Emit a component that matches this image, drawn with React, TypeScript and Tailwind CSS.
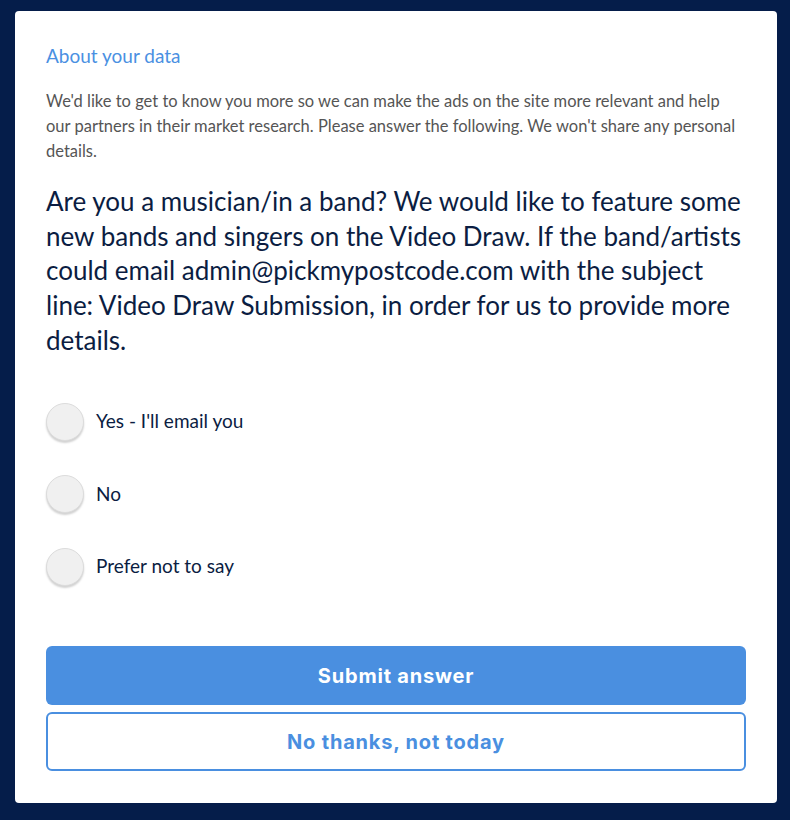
const OPTIONS = ["Yes - I'll email you", "No", "Prefer not to say"];

export default function App() {
  return (
    <div className="min-h-[820px] bg-[#051d4a] pt-[11px] pb-[17px] pl-[15px] pr-[13px] font-['Lato','Liberation_Sans',sans-serif]">
      <div className="h-[792px] rounded-[4px] bg-white px-[31px] pt-[33px] pb-[32px] flex flex-col">
        {/* Header */}
        <h2 className="text-[19px] leading-[24px] text-[#4a90e2]">About your data</h2>
        <p className="mt-[21px] text-[16.5px] leading-[25px] text-[#555555]">
          We'd like to get to know you more so we can make the ads on the site more relevant and help
          <br />
          our partners in their market research. Please answer the following. We won't share any personal
          <br />
          details.
        </p>

        {/* Question */}
        <p className="mt-[20px] text-[26px] leading-[34.7px] text-[#0b1d42]">
          Are you a musician/in a band? We would like to feature some new bands and singers on the Video
          Draw. If the band/artists could email admin@pickmypostcode.com with the subject line: Video Draw
          Submission, in order for us to provide more details.
        </p>

        {/* Options */}
        <div className="mt-[45px] flex flex-col gap-[34.5px]">
          {OPTIONS.map((opt) => (
            <label key={opt} className="flex items-center gap-[12px] cursor-pointer">
              <span className="w-[38px] h-[38px] rounded-full bg-[#f0f0f0] border border-[#dcdcdc] shadow-[0_2px_2px_rgba(0,0,0,0.18)] shrink-0" />
              <span className="text-[19px] text-[#0b1d42]">{opt}</span>
            </label>
          ))}
        </div>

        {/* Buttons */}
        <div className="mt-auto flex flex-col gap-[7px]">
          <button className="h-[59px] rounded-[6px] bg-[#4a8fe0] text-white text-[20px] tracking-[0.8px] font-bold font-['Inter',sans-serif]">
            Submit answer
          </button>
          <button className="h-[59px] rounded-[6px] border-2 border-[#4a8fe0] bg-white text-[#4a8fe0] text-[20px] tracking-[0.8px] font-bold font-['Inter',sans-serif]">
            No thanks, not today
          </button>
        </div>
      </div>
    </div>
  );
}
